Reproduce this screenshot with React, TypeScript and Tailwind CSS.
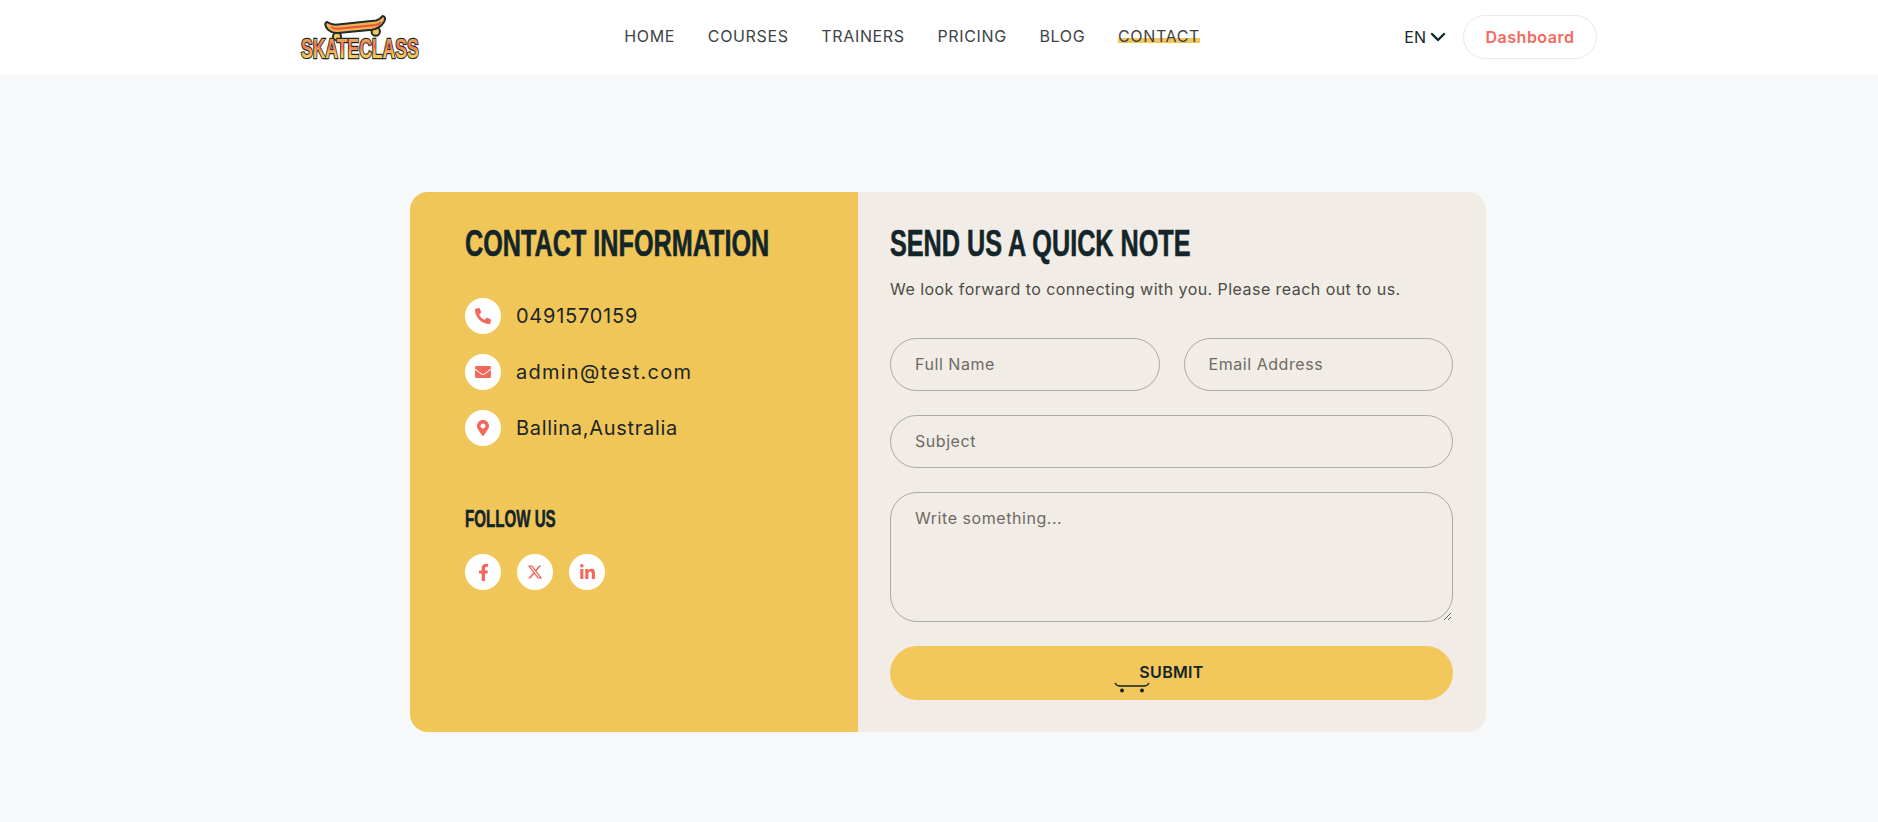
import React from 'react';
import { FaPhoneAlt, FaEnvelope, FaMapMarkerAlt, FaFacebookF, FaLinkedinIn } from 'react-icons/fa';
import { FaXTwitter } from 'react-icons/fa6';
import { ChevronDown } from 'lucide-react';

const navItems = ['HOME', 'COURSES', 'TRAINERS', 'PRICING', 'BLOG', 'CONTACT'];

const Logo = () => (
  <svg width="122" height="54" viewBox="0 0 122 54" className="block">
    <defs>
      <linearGradient id="logoText" gradientUnits="userSpaceOnUse" x1="0" y1="-20" x2="0" y2="0">
        <stop offset="0" stopColor="#f2b04f" />
        <stop offset="0.4" stopColor="#ee7350" />
        <stop offset="0.75" stopColor="#f5b955" />
        <stop offset="1" stopColor="#f7cf5b" />
      </linearGradient>
    </defs>
    {/* board */}
    <g transform="translate(0 2)">
      <circle cx="37" cy="23.5" r="4" fill="#f6c957" stroke="#1f2a2c" strokeWidth="2" />
      <circle cx="75.7" cy="18.5" r="4.2" fill="#f6c957" stroke="#1f2a2c" strokeWidth="2" />
      <path d="M27 9 C30 11 34 12 38 11.5 L76 7.5 C79 7 81 5 82.5 3 C85 3 86 6 84 9 C81 14 77 16 72 16.7 L38 20 C33 20.5 28 18 26 14 C25 12 25 10 27 9 Z" fill="#f5b04f" stroke="#1f2a2c" strokeWidth="2" />
      <path d="M31 14 C34 16 37 16 40 15.6 L76 12 C78 11.5 80 10.5 81 9" fill="none" stroke="#e8523f" strokeWidth="2" />
    </g>
    <text transform="translate(1 47) scale(0.65 1)" fontFamily="'Liberation Sans',sans-serif" fontWeight="700" fontSize="27" fill="url(#logoText)" stroke="#1f2a2c" strokeWidth="2.4" paintOrder="stroke">SKATECLASS</text>
  </svg>
);

const ContactRow = ({ icon: Icon, text, size, track }: { icon: any; text: string; size: number; track: string }) => (
  <div className="flex items-center gap-[15px]">
    <span className="w-9 h-9 rounded-full bg-white flex items-center justify-center text-[#f4685c]">
      <Icon size={size} />
    </span>
    <span className={`text-[20px] leading-none pb-[1px] text-[#1c2526] ${track}`}>{text}</span>
  </div>
);

const Social = ({ icon: Icon, size }: { icon: any; size: number }) => (
  <a href="#" className="w-9 h-9 rounded-full bg-white flex items-center justify-center text-[#f4685c]">
    <Icon size={size} />
  </a>
);

const fieldClass =
  'w-full bg-transparent border border-[#aaa9a2] rounded-[27px] px-6 text-base text-[#333] placeholder:text-[#6d6b66] tracking-[0.55px] outline-none';

const headingClass =
  "font-['Liberation_Sans',sans-serif] font-bold text-[#14252a] whitespace-nowrap origin-left [-webkit-text-stroke:0.6px_#14252a]";

export default function App() {
  return (
    <div className="min-h-screen bg-[#f7f8fa] font-['Inter',sans-serif]">
      <header className="bg-white h-[75px] pl-[300px] pr-[281px] flex items-center justify-between">
        <Logo />
        <nav className="flex items-center gap-[32.7px] text-[16px] text-[#3e4346] tracking-[0.65px] -ml-[2px] pb-[3px]">
          {navItems.map((item) => (
            <a key={item} href="#" className="relative">
              {item === 'CONTACT' && <span className="absolute left-0 right-0 top-[14px] h-[5px] bg-[#f0c659]" />}
              <span className="relative">{item}</span>
            </a>
          ))}
        </nav>
        <div className="flex items-center pb-[1px]">
          <button className="flex items-center text-[16px] text-[#14272b]">
            EN <ChevronDown size={24} strokeWidth={2.4} />
          </button>
          <a href="#" className="ml-[13px] h-[44px] w-[134px] rounded-full border border-[#e9e9ea] flex items-center justify-center text-[16px] font-semibold text-[#f4685c] tracking-[0.5px]">
            Dashboard
          </a>
        </div>
      </header>

      <main className="pt-[117px] pl-[410px]">
        <div className="w-[1076px] h-[540px] rounded-[18px] overflow-hidden flex">
          <section className="w-[448px] bg-[#f0c659] pl-[55px] pt-[28px]">
            <h2 className={`${headingClass} text-[36px] leading-[48px] scale-x-[0.7]`}>CONTACT INFORMATION</h2>
            <div className="mt-[30px] flex flex-col gap-5">
              <ContactRow icon={FaPhoneAlt} text="0491570159" size={16} track="tracking-[0.75px]" />
              <ContactRow icon={FaEnvelope} text="admin@test.com" size={16} track="tracking-[1.25px]" />
              <ContactRow icon={FaMapMarkerAlt} text="Ballina,Australia" size={16} track="tracking-[0.7px]" />
            </div>
            <h3 className={`${headingClass} mt-[58px] text-[24px] leading-[30px] scale-x-[0.63]`}>FOLLOW US</h3>
            <div className="mt-[20px] flex gap-4">
              <Social icon={FaFacebookF} size={17} />
              <Social icon={FaXTwitter} size={16} />
              <Social icon={FaLinkedinIn} size={17} />
            </div>
          </section>

          <section className="flex-1 bg-[#f1ece5] pl-[32px] pr-[33px] pt-[28px]">
            <h2 className={`${headingClass} text-[36px] leading-[48px] scale-x-[0.7]`}>SEND US A QUICK NOTE</h2>
            <p className="mt-[9px] text-[16px] leading-6 text-[#4b4b48] tracking-[0.45px]">We look forward to connecting with you. Please reach out to us.</p>
            <form className="mt-[37px] flex flex-col gap-[24px]">
              <div className="flex gap-[24px]">
                <input placeholder="Full Name" className={`${fieldClass} h-[53px] pb-[2px]`} />
                <input placeholder="Email Address" className={`${fieldClass} h-[53px] pb-[2px]`} />
              </div>
              <input placeholder="Subject" className={`${fieldClass} h-[53px] pb-[2px]`} />
              <textarea placeholder="Write something..." className={`${fieldClass} h-[130px] py-[13px] block`} />
              <button type="button" className="relative h-[54px] pb-[2px] rounded-full bg-[#f2c75c] text-[16px] font-semibold text-[#14252a] tracking-[0.3px]">
                SUBMIT
                <svg width="36" height="12" viewBox="0 0 36 12" className="absolute left-[224px] top-[36px]">
                  <path d="M1 1 C2 3 4 4 6 4 L30 4 C32 4 34 3 35 1" fill="none" stroke="#14252a" strokeWidth="1.3" />
                  <circle cx="8" cy="8.5" r="2" fill="#14252a" />
                  <circle cx="28" cy="8.5" r="2" fill="#14252a" />
                </svg>
              </button>
            </form>
          </section>
        </div>
      </main>
    </div>
  );
}
